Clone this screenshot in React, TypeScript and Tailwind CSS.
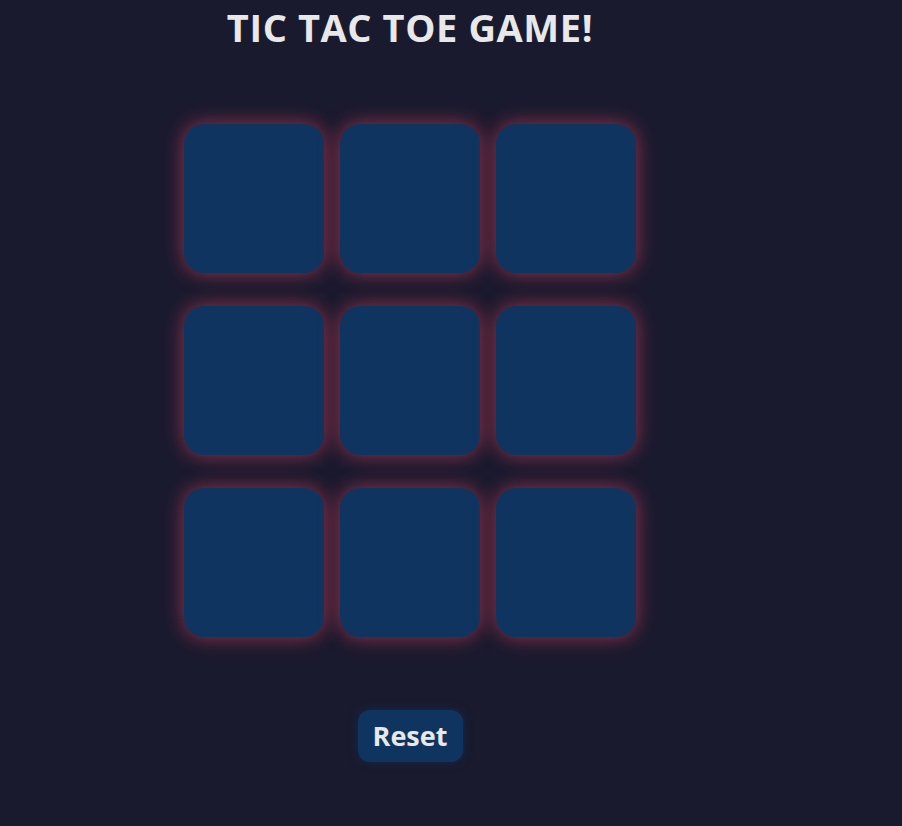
import React, { useState } from 'react';

const cells = [0, 1, 2, 3, 4, 5, 6, 7, 8];

export default function App(): JSX.Element {
    const [board, setBoard] = useState<string[]>(Array(9).fill(''));

    return (
        <div className="min-h-[826px] w-full bg-[#1a1a2e] font-['Open_Sans',sans-serif]">
            <div className="flex w-[820px] flex-col items-center">
                <h1 className="mt-[5px] h-[45px] text-[38px] font-bold leading-[45px] tracking-[0.6px] text-[#e8e8e8]">TIC TAC TOE GAME!</h1>

                <div className="mt-[74px] grid grid-cols-[140px_140px_140px] auto-rows-[149px] gap-x-4 gap-y-[33px]">
                    {cells.map((i) => (
                        <div
                            key={i}
                            className="flex items-center justify-center rounded-[20px] bg-[#0f3460] text-5xl font-bold text-[#e8e8e8] shadow-[0_0_20px_rgba(233,69,96,0.6)]"
                        >
                            {board[i]}
                        </div>
                    ))}
                </div>

                <button
                    onClick={() => setBoard(Array(9).fill(''))}
                    className="mt-[73px] h-[52px] w-[105px] rounded-[12px] bg-[#0f3460] text-[27px] font-bold text-[#e8e8e8] shadow-[0_0_10px_rgba(15,52,96,0.6)]"
                >
                    Reset
                </button>
            </div>
        </div>
    );
}
